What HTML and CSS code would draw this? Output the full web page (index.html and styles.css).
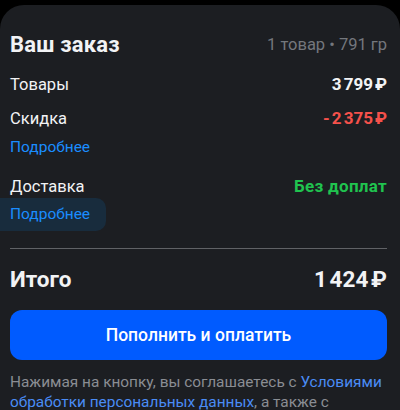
FILE: index.html
```html
<!DOCTYPE html>
<html lang="ru">
<head>
  <meta charset="UTF-8">
  <title>Ваш заказ</title>
  <link rel="stylesheet" href="styles.css">
</head>
<body>

  <div class="card">
    <div class="head">
      <h2>Ваш заказ</h2>
      <span class="meta">1 товар • 791 гр</span>
    </div>

    <div class="row">
      <span>Товары</span>
      <span class="sum">3&#8239;799&#8239;₽</span>
    </div>
    <div class="row">
      <span>Скидка</span>
      <span class="sum red">-&#8239;2&#8239;375&#8239;₽</span>
    </div>
    <a class="more" href="#">Подробнее</a>

    <div class="row delivery">
      <span>Доставка</span>
      <span class="sum green">Без доплат</span>
    </div>
    <a class="more active" href="#">Подробнее</a>

    <hr class="line">

    <div class="total">
      <span>Итого</span>
      <span>1&#8239;424&#8239;₽</span>
    </div>

    <button class="pay">Пополнить и оплатить</button>

    <p class="note">Нажимая на кнопку, вы соглашаетесь с <a href="#">Условиями обработки персональных данных</a>, а также с</p>
  </div>

</body>
</html>
```

FILE: styles.css
```css
body { margin: 0; background: #000; font-family: Roboto, "Noto Sans", sans-serif; color: #f2f3f5; height: 410px; overflow: hidden; }
.card { margin-top: 5px; background: #1c1e22; border-radius: 24px 24px 0 0; padding: 27px 13px 0 10px; height: 405px; box-sizing: border-box; }
.head { display: flex; justify-content: space-between; align-items: center; height: 24px; margin-bottom: 11px; }
h2 { margin: 0; font-size: 22px; font-weight: 700; letter-spacing: 0.2px; }
.meta { color: #74777d; font-size: 16.5px; font-weight: 400; }
.row { display: flex; justify-content: space-between; align-items: center; height: 34px; font-size: 16.5px; }
.sum { font-weight: 700; font-size: 17px; }
.red { color: #f5514b; }
.green { color: #20c34f; letter-spacing: 0.3px; }
.more { display: block; color: #1a8dff; text-decoration: none; font-size: 15.5px; line-height: 24px; }
.delivery { height: 24px; margin-top: 15px; }
.more.active { margin-left: -10px; padding-left: 10px; width: 80px; padding-right: 16px; line-height: 33px; background: #182c3d; border-radius: 0 10px 10px 0; }
.line { border: 0; border-top: 1px solid #606266; margin: 17px 0 0; }
.total { display: flex; justify-content: space-between; align-items: center; height: 24px; margin-top: 18px; font-size: 22.5px; font-weight: 700; }
.pay { display: block; width: 100%; height: 50px; margin-top: 19px; border: 0; border-radius: 12px; background: #005bff; color: #fff; font-family: inherit; font-size: 17.5px; font-weight: 500; }
.note { margin: 13px 0 0; color: #8a8d93; font-size: 15.4px; line-height: 19.5px; }
.note a { color: #4a8cf5; text-decoration: none; }
```
